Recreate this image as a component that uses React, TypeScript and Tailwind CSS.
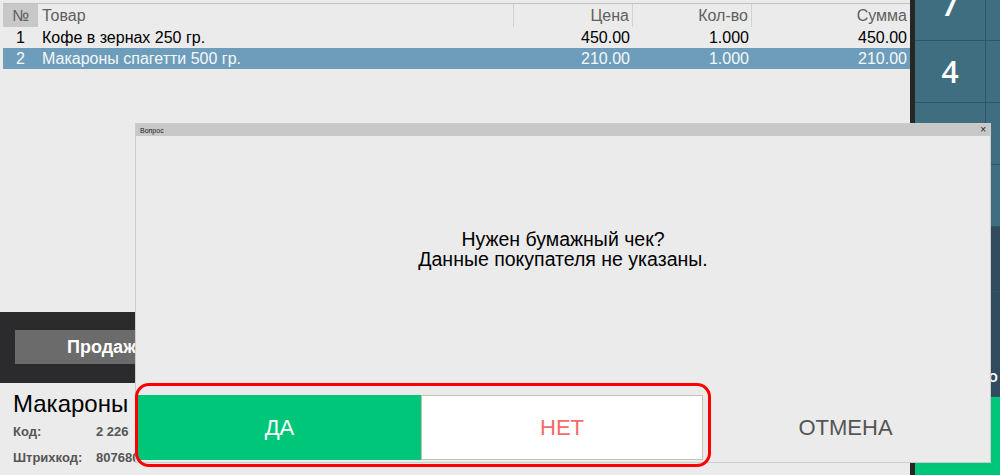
import React from "react";

type Row = { n: string; name: string; price: string; qty: string; sum: string; active?: boolean };

const ROWS: Row[] = [
  { n: "1", name: "Кофе в зернах 250 гр.", price: "450.00", qty: "1.000", sum: "450.00" },
  { n: "2", name: "Макароны спагетти 500 гр.", price: "210.00", qty: "1.000", sum: "210.00", active: true },
];

const COLS = "grid grid-cols-[35px_476px_119px_119px_158px]";

const App: React.FC = () => {
  return (
    <div className="relative w-[1000px] h-[475px] overflow-hidden bg-[#ebebeb] flex font-['Liberation_Sans',Arial,sans-serif]">
      {/* left: receipt table + bottom panels */}
      <div className="w-[910px] flex flex-col">
        <div className="h-[312px] pt-[3px] pl-[3px]">
          <div className={`${COLS} h-[24px] border-t border-[#c2c2c2] text-[16px] text-[#5f5f5f] leading-[23px]`}>
            <div className="bg-[#c8c8c8] text-center">№</div>
            <div className="pl-[4px] border-r border-[#d2d2d2]">Товар</div>
            <div className="pr-[3px] text-right border-r border-[#d2d2d2]">Цена</div>
            <div className="pr-[3px] text-right border-r border-[#d2d2d2]">Кол-во</div>
            <div className="pr-[3px] text-right">Сумма</div>
          </div>
          {ROWS.map((row) => (
            <div
              key={row.n}
              className={`${COLS} h-[21px] leading-[21px] text-[16px] ${
                row.active ? "bg-[#6d9dba] text-[#f4f8fa]" : "text-black"
              }`}
            >
              <div className="text-center">{row.n}</div>
              <div className="pl-[4px]">{row.name}</div>
              <div className="pr-[3px] text-right">{row.price}</div>
              <div className="pr-[3px] text-right">{row.qty}</div>
              <div className="pr-[3px] text-right">{row.sum}</div>
            </div>
          ))}
        </div>

        <div className="h-[71px] bg-[#2b2b2d] pt-[18px] pl-[15px]">
          <button className="w-[300px] h-[34px] bg-[#6b6b6b] text-white text-[18px] font-bold text-left pl-[52px]">
            Продажа
          </button>
        </div>

        <div className="pl-[13px] pt-[6px]">
          <div className="text-[24px] leading-[30px] text-black">Макароны спагетти 500 гр.</div>
          <div className="flex h-[26px] items-center text-[13px] font-bold text-[#555]">
            <span className="w-[83px]">Код:</span>
            <span>2 226</span>
          </div>
          <div className="flex h-[26px] items-center text-[13px] font-bold text-[#555]">
            <span className="w-[83px]">Штрихкод:</span>
            <span>8076800195057</span>
          </div>
        </div>
      </div>

      <div className="w-[5px] bg-[#262626]" />

      {/* right: keypad */}
      <div className="flex-1 flex flex-col bg-[#2f5666] gap-[1px] font-['Open_Sans',sans-serif] font-semibold text-white">
        <div className="h-[40px] grid grid-cols-[70px_1fr] gap-[1px]">
          <div className="bg-[#3e6e80] overflow-hidden text-center text-[32px] leading-none -mt-[12px]">7</div>
          <div className="bg-[#3e6e80]" />
        </div>
        <div className="h-[61px] grid grid-cols-[70px_1fr] gap-[1px]">
          <div className="bg-[#3e6e80] flex items-center justify-center text-[30px]">4</div>
          <div className="bg-[#3e6e80]" />
        </div>
        <div className="h-[61px] grid grid-cols-[70px_1fr] gap-[1px]">
          <div className="bg-[#3e6e80] flex items-center justify-center text-[30px]">1</div>
          <div className="bg-[#3e6e80]" />
        </div>
        <div className="h-[61px] grid grid-cols-[70px_1fr] gap-[1px]">
          <div className="bg-[#3e6e80] flex items-center justify-center text-[30px]">0</div>
          <div className="bg-[#3e6e80]" />
        </div>
        <div className="h-[64px] bg-[#304b5e]" />
        <div className="h-[104px] bg-[#304b5e] flex items-end justify-end text-[16px] pr-[2px] pb-[8px]">o</div>
        <div className="flex-1 bg-[#00c67a]" />
      </div>

      {/* dialog */}
      <div className="absolute left-[135px] top-[123px] w-[856px] h-[340px] bg-[#ebebeb] border border-[#cdcdcd] flex flex-col">
        <div className="h-[12px] bg-[#c8c8c8] flex items-center justify-between px-[4px] text-[7px] leading-none text-[#222]">
          <span>Вопрос</span>
          <span className="text-[10px]">×</span>
        </div>
        <div className="flex-1 flex flex-col">
          <div className="pt-[93px] text-center text-[19.5px] leading-[20px] text-black">
            <p>Нужен бумажный чек?</p>
            <p>Данные покупателя не указаны.</p>
          </div>
          <div className="mt-auto flex h-[65px] px-[2px] mb-[2px] text-[22px]">
            <button className="w-[283px] bg-[#00c67a] text-white">ДА</button>
            <button className="w-[282px] bg-white border border-[#c9c2aa] text-[#f26b6b]">НЕТ</button>
            <button className="flex-1 text-[#555]">ОТМЕНА</button>
          </div>
        </div>
      </div>

      {/* highlight annotation */}
      <div className="absolute left-[135px] top-[383px] w-[576px] h-[84px] border-[3px] border-[#ff0000] rounded-[14px]" />
    </div>
  );
};

export default App;
